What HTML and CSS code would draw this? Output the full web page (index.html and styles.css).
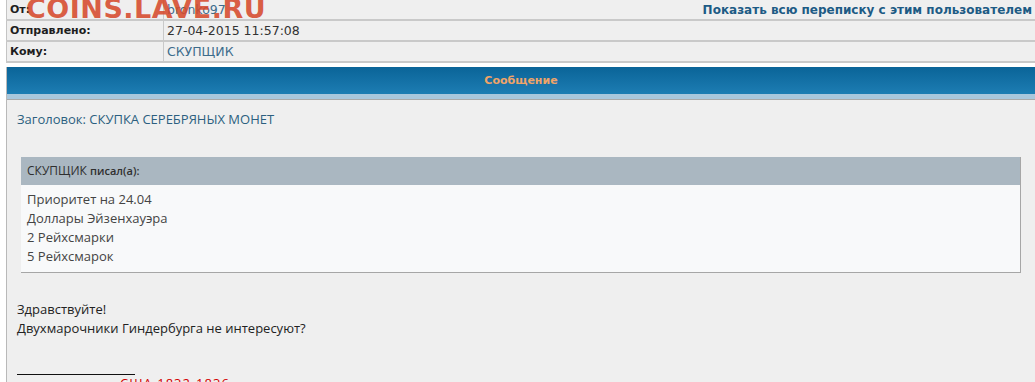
FILE: index.html
```html
<!DOCTYPE html>
<html lang="ru">
<head>
  <meta charset="UTF-8">
  <title>Личное сообщение</title>
  <link rel="stylesheet" href="styles.css">
</head>
<body>
  <div class="watermark">COINS.LAVE.RU</div>
  <table class="pm-info">
    <tr>
      <td class="label">От:</td>
      <td class="value"><a href="#" class="user">bronko97</a></td>
      <td class="all-link"><a href="#">Показать всю переписку с этим пользователем</a></td>
    </tr>
    <tr>
      <td class="label">Отправлено:</td>
      <td class="value">27-04-2015 11:57:08</td>
      <td></td>
    </tr>
    <tr>
      <td class="label">Кому:</td>
      <td class="value"><a href="#" class="user">СКУПЩИК</a></td>
      <td></td>
    </tr>
  </table>

  <div class="message">
    <div class="message-head">Сообщение</div>
    <div class="message-body">
      <div class="subject">Заголовок: СКУПКА СЕРЕБРЯНЫХ МОНЕТ</div>

      <div class="quote">
        <div class="quote-head">СКУПЩИК <b>писал(а):</b></div>
        <div class="quote-body">
          Приоритет на 24.04<br>
          Доллары Эйзенхауэра<br>
          2 Рейхсмарки<br>
          5 Рейхсмарок
        </div>
      </div>

      <div class="post-text">
        Здравствуйте!<br>
        Двухмарочники Гиндербурга не интересуют?
      </div>

      <div class="signature">
        <div class="sig-line"></div>
        <div class="sig-text">США 1832-1836</div>
      </div>
    </div>
  </div>
</body>
</html>
```

FILE: styles.css
```css
body {
  margin: 0;
  padding: 0 0 0 6px;
  background-color: #fff;
  font-family: "DejaVu Sans", Verdana, sans-serif;
  color: #222;
  overflow: hidden;
}
a {
  text-decoration: none;
}
.watermark {
  position: absolute;
  top: -7px;
  left: 26px;
  font-family: "DejaVu Sans", sans-serif;
  font-weight: bold;
  font-size: 27px;
  letter-spacing: 0.5px;
  color: rgba(214, 74, 44, 0.88);
}
.pm-info {
  width: 100%;
  border-collapse: collapse;
  border-left: 1px solid #c4c4c4;
}
.pm-info td {
  height: 19px;
  padding: 0 3px;
  background-color: #efefef;
  border-bottom: 2px solid #c9c9c9;
  font-size: 11px;
  vertical-align: middle;
}
.pm-info .label {
  width: 150px;
  font-weight: bold;
  color: #1e1e1e;
  border-right: 1px solid #c9c9c9;
}
.pm-info .value {
  font-size: 12.5px;
  color: #333;
  white-space: nowrap;
}
.user {
  color: #3d6c8c;
}
.all-link {
  text-align: right;
}
.all-link a {
  font-weight: bold;
  color: #1d5b85;
  font-size: 12px;
}
.message {
  margin-top: 4px;
  border-left: 1px solid #b9b9b9;
}
.message-head {
  height: 27px;
  line-height: 27px;
  text-align: center;
  font-size: 11px;
  font-weight: bold;
  color: #f0a468;
  background: linear-gradient(#0a6498, #1d7db3);
  border-bottom: 5px solid #a9c7dc;
  box-shadow: 0 1px 0 #a9a9a9;
}
.message-body {
  margin-top: 1px;
  background-color: #efefef;
  padding: 10px 0 0 10px;
  font-family: "Open Sans", "Noto Sans", sans-serif;
  font-size: 13px;
}
.subject {
  color: #2c5f80;
  line-height: 18px;
}
.quote {
  margin: 29px 14px 0 4px;
  border-right: 1px solid #a6a6a6;
  border-bottom: 1px solid #a6a6a6;
}
.quote-head {
  height: 28px;
  line-height: 28px;
  padding-left: 6px;
  background-color: #aab7c1;
  color: #2f2f2f;
  font-size: 12px;
}
.quote-head b {
  font-size: 11px;
  font-weight: 600;
}
.quote-body {
  background-color: #f8f9fa;
  padding: 5px 6px 6px;
  line-height: 19px;
  color: #444;
}
.post-text {
  margin-top: 27px;
  line-height: 19px;
  color: #222;
}
.signature {
  margin-top: 36px;
}
.sig-line {
  width: 118px;
  border-top: 1px solid #111;
}
.sig-text {
  margin: 2px 0 0 103px;
  line-height: 12px;
  color: #d40000;
  font-size: 13px;
  letter-spacing: 1px;
}
```
